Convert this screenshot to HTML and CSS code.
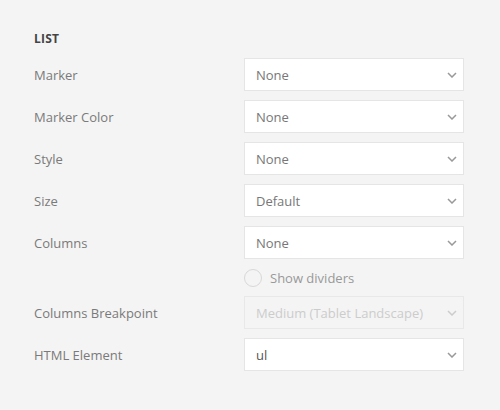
FILE: index.html
```html
<!DOCTYPE html>
<html>
<head>
<meta charset="utf-8">
<link rel="stylesheet" href="styles.css">
</head>
<body>
<div class="panel">
  <h3 class="heading">LIST</h3>
  <div class="form">
    <label class="label">Marker</label>
    <div class="select"><span>None</span><svg class="chev" viewBox="0 0 10 6"><path d="M1 1l4 4 4-4"/></svg></div>

    <label class="label">Marker Color</label>
    <div class="select"><span>None</span><svg class="chev" viewBox="0 0 10 6"><path d="M1 1l4 4 4-4"/></svg></div>

    <label class="label">Style</label>
    <div class="select"><span>None</span><svg class="chev" viewBox="0 0 10 6"><path d="M1 1l4 4 4-4"/></svg></div>

    <label class="label">Size</label>
    <div class="select"><span>Default</span><svg class="chev" viewBox="0 0 10 6"><path d="M1 1l4 4 4-4"/></svg></div>

    <label class="label">Columns</label>
    <div class="select"><span>None</span><svg class="chev" viewBox="0 0 10 6"><path d="M1 1l4 4 4-4"/></svg></div>

    <div class="check-row">
      <span class="radio"></span><span class="check-text">Show dividers</span>
    </div>

    <label class="label">Columns Breakpoint</label>
    <div class="select disabled"><span>Medium (Tablet Landscape)</span><svg class="chev" viewBox="0 0 10 6"><path d="M1 1l4 4 4-4"/></svg></div>

    <label class="label">HTML Element</label>
    <div class="select dark"><span>ul</span><svg class="chev" viewBox="0 0 10 6"><path d="M1 1l4 4 4-4"/></svg></div>
  </div>
</div>
</body>
</html>
```
FILE: styles.css
```css
html, body {
  margin: 0;
  padding: 0;
  background: #f4f4f4;
  font-family: "Open Sans", "Liberation Sans", sans-serif;
}
.panel {
  width: 500px;
  height: 410px;
  box-sizing: border-box;
  padding: 31px 36px 0 34px;
}
.heading {
  margin: 0 0 11px 0;
  font-size: 12px;
  line-height: 16px;
  font-weight: 700;
  color: #444;
  letter-spacing: 0.2px;
}
.form {
  display: grid;
  grid-template-columns: 210px 220px;
  grid-auto-rows: auto;
  row-gap: 9px;
  align-items: center;
}
.label {
  font-size: 13px;
  color: #7a7a7a;
  line-height: 18px;
}
.select {
  height: 33px;
  box-sizing: border-box;
  border: 1px solid #e5e5e5;
  background: #fff;
  display: flex;
  align-items: center;
  justify-content: space-between;
  padding: 0 6px 0 11px;
  font-size: 13px;
  color: #777;
}
.select.dark {
  color: #555;
}
.select.disabled {
  background: #f4f4f4;
  color: #ccc;
  border-color: #e8e8e8;
}
.chev {
  width: 10px;
  height: 6px;
  fill: none;
  stroke: #999;
  stroke-width: 1.5;
}
.select.disabled .chev {
  stroke: #ccc;
}
.check-row {
  grid-column: 2;
  display: flex;
  align-items: center;
  height: 19px;
  gap: 8px;
}
.radio {
  width: 18px;
  height: 18px;
  box-sizing: border-box;
  border: 1px solid #d8d8d8;
  border-radius: 50%;
  background: #f4f4f4;
}
.check-text {
  font-size: 13px;
  color: #999;
}
```
